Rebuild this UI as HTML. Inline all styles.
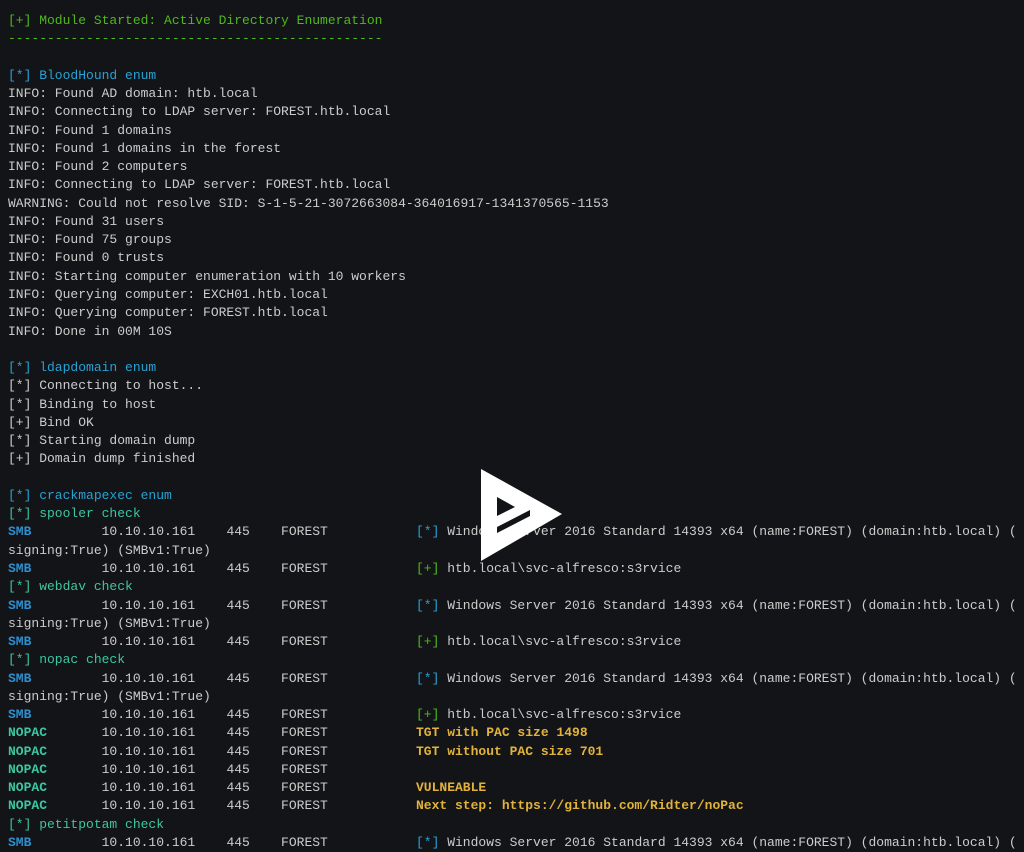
<!DOCTYPE html>
<html><head><meta charset="utf-8"><style>
html,body{margin:0;padding:0;background:#131417;width:1024px;height:839px;overflow:hidden}
#t{position:absolute;left:8px;top:12px;font-family:"Liberation Mono",monospace;font-size:13px;color:#cccccc}
.l{position:relative;height:18.27px;line-height:18.27px;white-space:pre}
.r{position:absolute;left:408px;top:0;white-space:pre}
.g{color:#4fb81c}.c{color:#27a2d4}.tl{color:#3cc6a2}.b{color:#2e8fd0;font-weight:bold}.n{color:#3cc6a2;font-weight:bold}.y{color:#e2b33a;font-weight:bold}
</style></head><body>
<div id="t"><div class="l g">[+] Module Started: Active Directory Enumeration</div><div class="l g">------------------------------------------------</div><div class="l"></div><div class="l c">[*] BloodHound enum</div><div class="l">INFO: Found AD domain: htb.local</div><div class="l">INFO: Connecting to LDAP server: FOREST.htb.local</div><div class="l">INFO: Found 1 domains</div><div class="l">INFO: Found 1 domains in the forest</div><div class="l">INFO: Found 2 computers</div><div class="l">INFO: Connecting to LDAP server: FOREST.htb.local</div><div class="l">WARNING: Could not resolve SID: S-1-5-21-3072663084-364016917-1341370565-1153</div><div class="l">INFO: Found 31 users</div><div class="l">INFO: Found 75 groups</div><div class="l">INFO: Found 0 trusts</div><div class="l">INFO: Starting computer enumeration with 10 workers</div><div class="l">INFO: Querying computer: EXCH01.htb.local</div><div class="l">INFO: Querying computer: FOREST.htb.local</div><div class="l">INFO: Done in 00M 10S</div><div class="l"></div><div class="l c">[*] ldapdomain enum</div><div class="l">[*] Connecting to host...</div><div class="l">[*] Binding to host</div><div class="l">[+] Bind OK</div><div class="l">[*] Starting domain dump</div><div class="l">[+] Domain dump finished</div><div class="l"></div><div class="l c">[*] crackmapexec enum</div><div class="l tl">[*] spooler check</div><div class="l"><span class="b">SMB</span>         10.10.10.161    445    FOREST<span class="r"><span class="c">[*]</span> Windows Server 2016 Standard 14393 x64 (name:FOREST) (domain:htb.local) (</span></div><div class="l">signing:True) (SMBv1:True)</div><div class="l"><span class="b">SMB</span>         10.10.10.161    445    FOREST<span class="r"><span class="g">[+]</span> htb.local\svc-alfresco:s3rvice</span></div><div class="l tl">[*] webdav check</div><div class="l"><span class="b">SMB</span>         10.10.10.161    445    FOREST<span class="r"><span class="c">[*]</span> Windows Server 2016 Standard 14393 x64 (name:FOREST) (domain:htb.local) (</span></div><div class="l">signing:True) (SMBv1:True)</div><div class="l"><span class="b">SMB</span>         10.10.10.161    445    FOREST<span class="r"><span class="g">[+]</span> htb.local\svc-alfresco:s3rvice</span></div><div class="l tl">[*] nopac check</div><div class="l"><span class="b">SMB</span>         10.10.10.161    445    FOREST<span class="r"><span class="c">[*]</span> Windows Server 2016 Standard 14393 x64 (name:FOREST) (domain:htb.local) (</span></div><div class="l">signing:True) (SMBv1:True)</div><div class="l"><span class="b">SMB</span>         10.10.10.161    445    FOREST<span class="r"><span class="g">[+]</span> htb.local\svc-alfresco:s3rvice</span></div><div class="l"><span class="n">NOPAC</span>       10.10.10.161    445    FOREST<span class="r y">TGT with PAC size 1498</span></div><div class="l"><span class="n">NOPAC</span>       10.10.10.161    445    FOREST<span class="r y">TGT without PAC size 701</span></div><div class="l"><span class="n">NOPAC</span>       10.10.10.161    445    FOREST</div><div class="l"><span class="n">NOPAC</span>       10.10.10.161    445    FOREST<span class="r y">VULNEABLE</span></div><div class="l"><span class="n">NOPAC</span>       10.10.10.161    445    FOREST<span class="r y">Next step: https://github.com/Ridter/noPac</span></div><div class="l tl">[*] petitpotam check</div><div class="l"><span class="b">SMB</span>         10.10.10.161    445    FOREST<span class="r"><span class="c">[*]</span> Windows Server 2016 Standard 14393 x64 (name:FOREST) (domain:htb.local) (</span></div></div>
<svg style="position:absolute;left:0;top:0" width="1024" height="839">
<polygon points="481,469 481,561 562,514" fill="#ffffff"/>
<polygon points="497,497 497,516 515,507" fill="#131417"/>
<polygon points="497,527 530,510 530,516 497,533" fill="#131417"/>
</svg>
</body></html>
